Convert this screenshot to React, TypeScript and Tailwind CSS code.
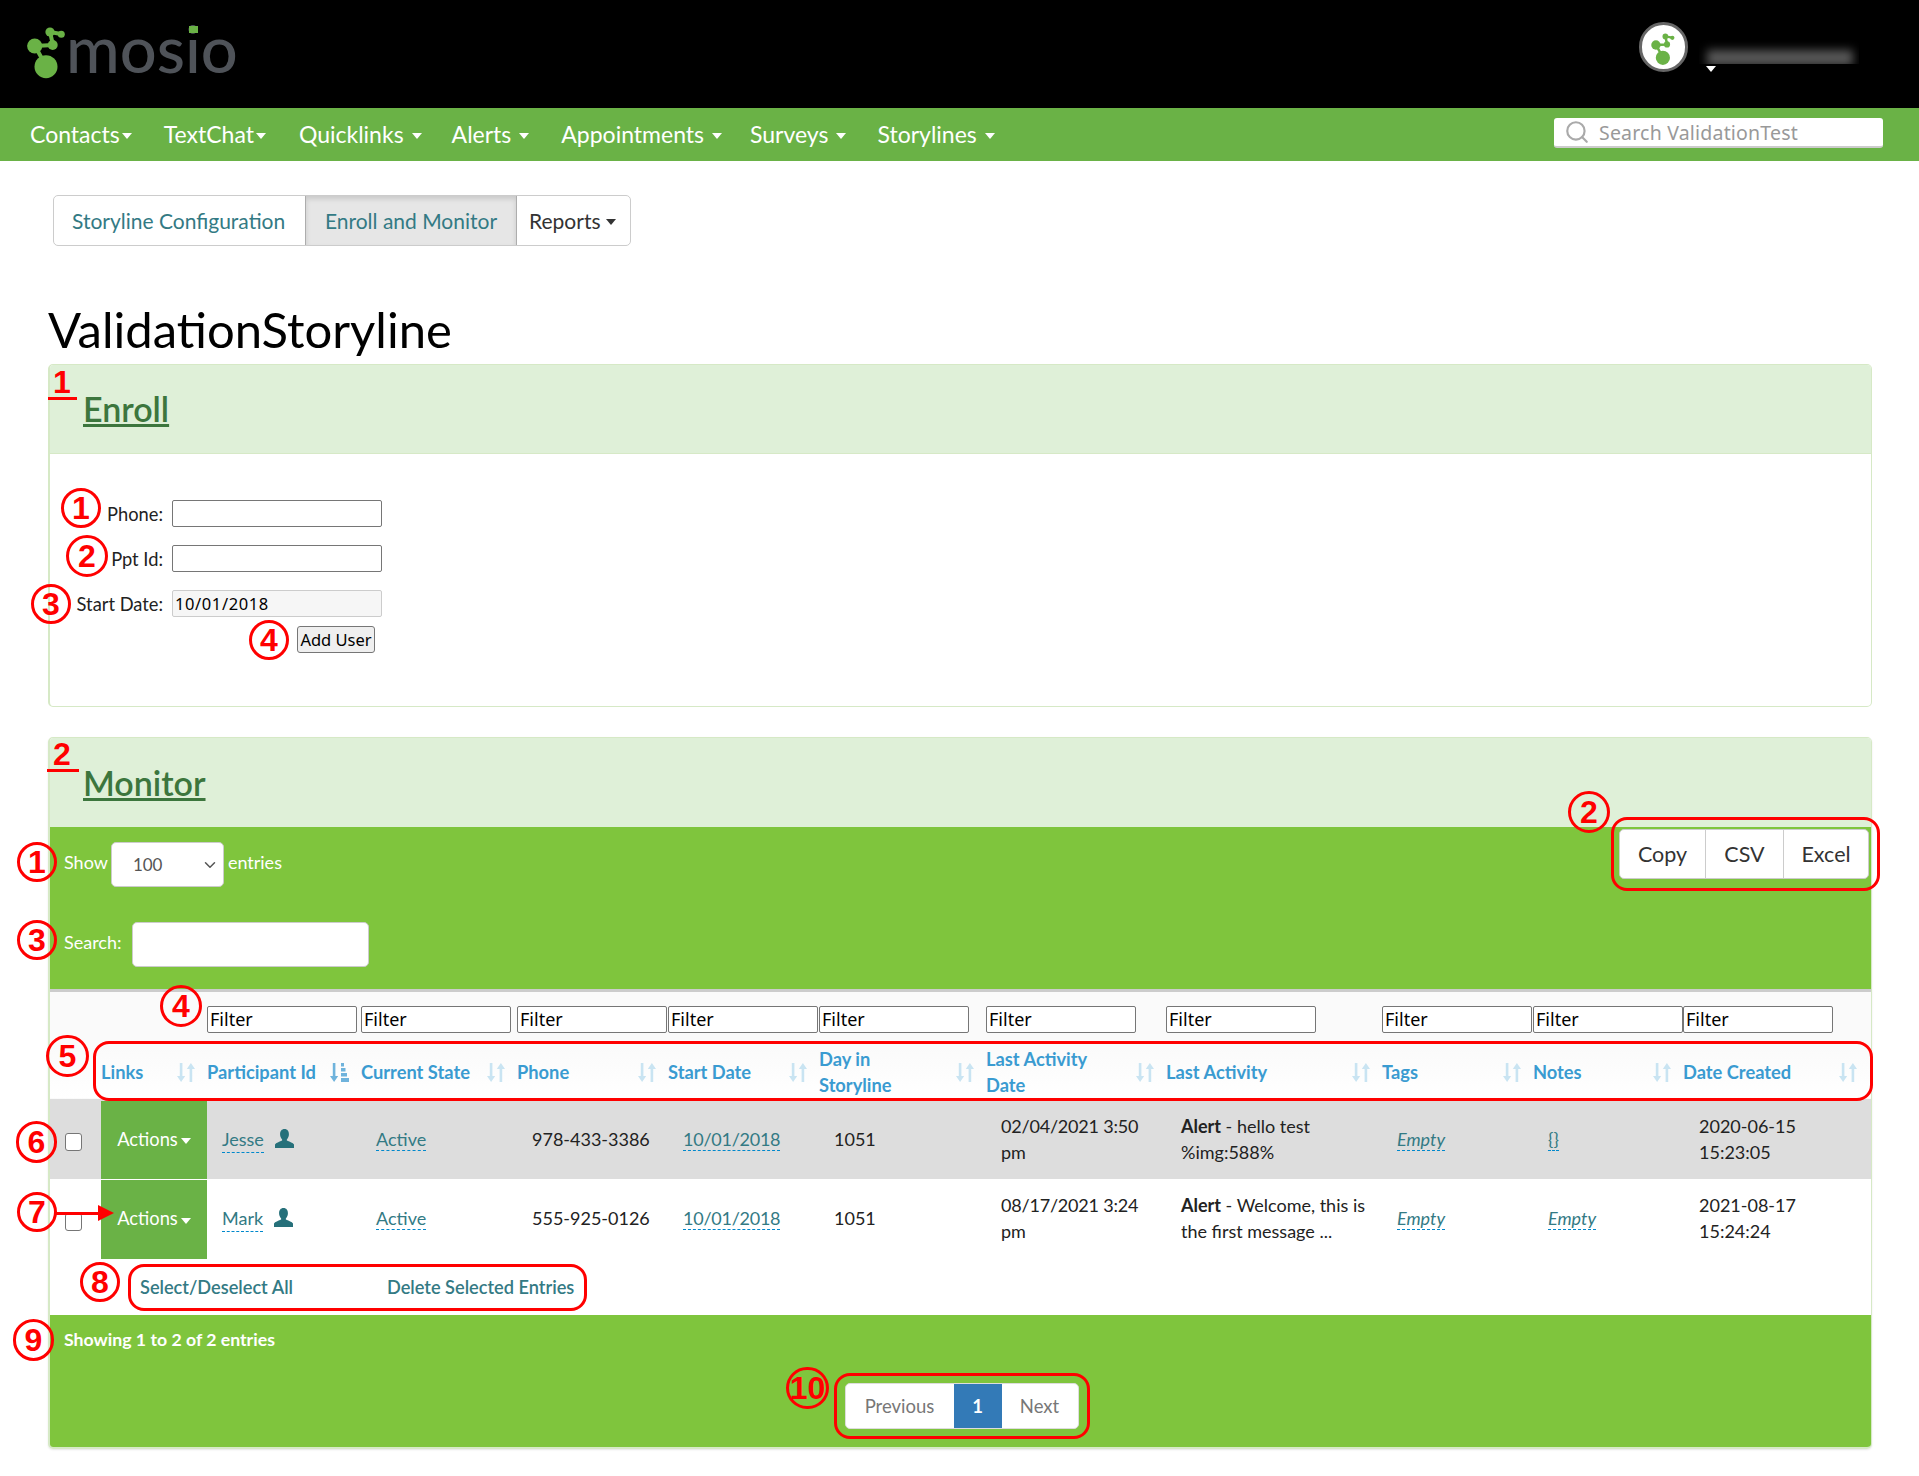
import React from "react";
import { Search, ChevronDown } from "lucide-react";

function Cluster({ className }: { className: string }) {
  return (
    <svg viewBox="0 0 40 60" className={className} fill="#6ab246">
      <path d="M8 26 L19 46 M8 26 L26 25 M26 25 L23 12 M23 12 L34 14" stroke="#6ab246" strokeWidth="4" fill="none" />
      <circle cx="19" cy="46.700" r="11.500" />
      <circle cx="7.700" cy="26" r="7.600" />
      <circle cx="25.700" cy="25" r="5" />
      <circle cx="23" cy="12" r="4.600" />
      <circle cx="34.300" cy="14.300" r="3.500" />
    </svg>
  );
}

function Caret({ className = "" }: { className?: string }) {
  return <span className={"inline-block w-0 h-0 border-x-[5px] border-x-transparent border-t-[6px] border-t-current " + className} />;
}

function NavItem({ label, tight, className }: { label: string; tight?: boolean; className: string }) {
  return (
    <a className={"flex items-center text-white text-[23px] " + className}>
      {label}
      <Caret className={tight ? "ml-[2px] mt-[3px]" : "ml-[8px] mt-[3px]"} />
    </a>
  );
}

function SortIcon() {
  return (
    <svg viewBox="0 0 18 19" className="w-[18px] h-[19px] shrink-0" fill="#c9e4f2">
      <path d="M2.800 0h2.600v13h2.800L4.100 19 0 13h2.800z" />
      <path d="M12.600 19h2.600V6H18L13.900 0 9.800 6h2.800z" />
    </svg>
  );
}

function SortedIcon() {
  return (
    <svg viewBox="0 0 19 19" className="w-[19px] h-[19px] shrink-0" fill="#6fb3dc">
      <path d="M2.800 0h2.600v13h2.800L4.100 19 0 13h2.800z" />
      <path d="M11 0h3v3.500h-3zM11 5h4.500v3.500H11zM11 10h6v3.500h-6zM11 15h8v4h-8z" />
    </svg>
  );
}

function Person() {
  return (
    <svg viewBox="0 0 18 18" className="w-[19px] h-[19px] ml-[11px] -mt-[2px] shrink-0" fill="#26707a">
      <path d="M9 0c2.700 0 4.200 2.100 4.200 4.900 0 1.900-.8 3.600-1.800 4.700-.4.500-.3 1.300.3 1.600 2.400 1 5.300 2 6.300 3.500V18H0v-3.300c1-1.500 3.900-2.500 6.300-3.500.6-.3.700-1.100.3-1.600C5.600 8.500 4.800 6.800 4.800 4.900 4.800 2.100 6.300 0 9 0z" />
    </svg>
  );
}

function Editable({ children, italic, className = "" }: { children: React.ReactNode; italic?: boolean; className?: string }) {
  return (
    <a className={"text-[#337a84] border-b border-dashed border-[#0088cc] " + (italic ? "italic " : "") + className}>{children}</a>
  );
}

function Circle({ n, className }: { n: string; className: string }) {
  return (
    <div
      className={
        "absolute flex items-center justify-center rounded-full border-[3px] border-[#f00] font-['Liberation_Sans',sans-serif] font-bold text-[#f00] text-[32px] leading-none " +
        className
      }
    >
      {n}
    </div>
  );
}

function Box({ className }: { className: string }) {
  return <div className={"absolute rounded-[16px] border-[3px] border-[#f00] " + className} />;
}

const headers = ["Links", "Participant Id", "Current State", "Phone", "Start Date", "Day in Storyline", "Last Activity Date", "Last Activity", "Tags", "Notes", "Date Created"];

const formFont = "font-['Noto_Sans',sans-serif]";

function Row({
  bg,
  name,
  phone,
  when,
  msg,
  notes,
  created,
  gap,
}: {
  bg: string;
  name: string;
  phone: string;
  when: React.ReactNode;
  msg: React.ReactNode;
  notes: React.ReactNode;
  created: React.ReactNode;
  gap?: boolean;
}) {
  return (
    <tr className={bg}>
      <td className="pl-[15px]">
        <input type="checkbox" className={"block w-[17px] h-[18px] appearance-none bg-white border border-[#767676] rounded-[3px] " + (gap ? "mt-[6px]" : "mt-[5px]")} />
      </td>
      <td className={"p-0 " + (gap ? "border-t border-white" : "")}>
        <div className={"flex items-center justify-center bg-[#6ab246] text-white text-[18.300px] " + (gap ? "h-[79px]" : "h-[78px]")}>
          Actions
          <Caret className="ml-[3px] mt-[3px]" />
        </div>
      </td>
      <td className="pl-[15px]">
        <div className="flex items-center">
          <Editable>{name}</Editable>
          <Person />
        </div>
      </td>
      <td className="pl-[15px]">
        <Editable>Active</Editable>
      </td>
      <td className="pl-[15px]">{phone}</td>
      <td className="pl-[15px]">
        <Editable className="tracking-[-0.25px]">10/01/2018</Editable>
      </td>
      <td className="pl-[15px]">1051</td>
      <td className="pl-[15px] pr-[8px] tracking-[-0.2px]">{when}</td>
      <td className="pl-[15px] pr-[8px]">{msg}</td>
      <td className="pl-[15px]">
        <Editable italic>Empty</Editable>
      </td>
      <td className="pl-[15px]">{notes}</td>
      <td className="pl-[16px] pr-[40px]">{created}</td>
    </tr>
  );
}

export default function App() {
  return (
    <div className="relative w-[1919px] min-h-[1476px] bg-white font-[Lato,sans-serif] text-[18px] leading-[25.500px] text-[#222]">
      <header className="h-[108px] bg-black flex items-center justify-between pl-[27px] pr-[60px]">
        <div className="relative flex items-center -mt-[8px]">
          <Cluster className="w-[40px] h-[60px]" />
          <span className="text-[65px] font-medium leading-none text-[#4f5359] -ml-[1px] -mt-[3px]">mosio</span>
          <span className="absolute left-[162px] top-[7px] w-[9px] h-[7px] bg-[#6ab246]" />
        </div>
        <div className="flex items-center">
          <div className="flex items-center justify-center w-[49px] h-[50px] rounded-full bg-white border-[3px] border-[#666] -mt-[14px]">
            <Cluster className="w-[25px] h-[37px]" />
          </div>
          <div className="ml-[11px] relative w-[160px] h-[34px] mt-[2px]">
            <div className="relative h-[26px] overflow-hidden">
              <div className="absolute left-[8px] right-[6px] top-[12px] h-[16px] bg-[#585858] blur-[5px]" />
            </div>
            <Caret className="absolute left-[7px] top-[28px] text-white" />
          </div>
        </div>
      </header>

      <nav className="h-[53px] bg-[#6ab246] flex items-center pl-[30px] pr-[36px]">
        <NavItem label="Contacts" tight className="mr-[32px]" />
        <NavItem label="TextChat" tight className="mr-[33px]" />
        <NavItem label="Quicklinks" className="mr-[30px]" />
        <NavItem label="Alerts" className="mr-[32px]" />
        <NavItem label="Appointments" className="mr-[28px]" />
        <NavItem label="Surveys" className="mr-[31px]" />
        <NavItem label="Storylines" className="mr-[30px]" />
        <div className="ml-auto -mt-[3px] flex items-center w-[329px] h-[30px] bg-white rounded-[3px] border-b-2 border-[#ccc] pl-[10px]">
          <Search className="w-[26px] h-[26px] text-[#aaa] shrink-0" strokeWidth={2} />
          <span className="ml-[9px] mt-[2px] font-['Noto_Sans',sans-serif] text-[#999] text-[19.500px] tracking-[0.2px]">Search ValidationTest</span>
        </div>
      </nav>

      <main className="pl-[48px] pr-[47px]">
        <div className="ml-[5px] mt-[34px] inline-flex h-[51px] text-[21px] border border-[#ccc] rounded-[5px] overflow-hidden align-top">
          <a className="flex items-center px-[18px] text-[#337a84] w-[251px] whitespace-nowrap">Storyline Configuration</a>
          <a className="flex items-center justify-center w-[212px] bg-[#e6e6e6] border-x border-[#adadad] shadow-[inset_0_3px_5px_rgba(0,0,0,0.125)] text-[#337a84] whitespace-nowrap">Enroll and Monitor</a>
          <a className="flex items-center pl-[12px] text-[#333] w-[113px]">
            Reports
            <Caret className="ml-[5px] mt-[2px]" />
          </a>
        </div>

        <h1 className="mt-[46px] h-[72px] flex items-center pt-[2px] text-[49px] leading-none text-black">ValidationStoryline</h1>

        <section className="border border-l-2 border-[#d6e9c6] rounded-[5px] overflow-hidden h-[343px]">
          <div className="h-[89px] bg-[#dff0d8] border-b border-[#d6e9c6] flex items-center pl-[33px]">
            <a className="text-[34px] font-semibold underline text-[#3c763d] leading-none">Enroll</a>
          </div>
          <div className="pt-[46px] w-[340px] text-[18.300px]">
            <div className="flex items-center h-[27px]">
              <label className="w-[113px] text-right mt-[3px]">Phone:</label>
              <input className="ml-[9px] w-[210px] h-[27px] bg-white border border-[#767676] rounded-[2px]" />
            </div>
            <div className="flex items-center h-[27px] mt-[18px]">
              <label className="w-[113px] text-right mt-[3px]">Ppt Id:</label>
              <input className="ml-[9px] w-[210px] h-[27px] bg-white border border-[#767676] rounded-[2px]" />
            </div>
            <div className="flex items-center h-[27px] mt-[18px]">
              <label className="w-[113px] text-right mt-[3px]">Start Date:</label>
              <input
                readOnly
                defaultValue="10/01/2018"
                className={"ml-[9px] w-[210px] h-[27px] bg-[#f6f6f6] border border-[#ccc] rounded-[2px] px-[2px] text-black text-[16.500px] tracking-[0.6px] " + formFont}
              />
            </div>
            <div className="mt-[9px] pl-[247px]">
              <button className={"block w-[78px] h-[27px] pt-[2px] bg-[#efefef] border border-[#767676] rounded-[3px] text-black text-[16.500px] leading-none " + formFont}>Add User</button>
            </div>
          </div>
        </section>

        <section className="mt-[30px] border border-l-2 border-b-2 border-[#d6e9c6] rounded-[5px] overflow-hidden shadow-[0_1px_2px_rgba(0,0,0,0.1)]">
          <div className="h-[89px] bg-[#dff0d8] flex items-center pl-[33px]">
            <a className="text-[34px] font-semibold underline text-[#3c763d] leading-none">Monitor</a>
          </div>
          <div className="bg-[#7fc53d] h-[162px] flex justify-between text-white text-[18px]">
            <div className="pl-[14px]">
              <div className="flex items-center h-[45px] mt-[15px]">
                <span className="-mt-[4px]">Show</span>
                <div className="relative ml-[3px]">
                  <select defaultValue="100" className="block appearance-none w-[113px] h-[45px] pl-[21px] bg-white text-[#555] text-[17px] border border-[#ccc] rounded-[5px]">
                    <option>10</option>
                    <option>100</option>
                  </select>
                  <ChevronDown className="absolute right-[5px] top-[14px] w-[18px] h-[18px] text-[#555] pointer-events-none" strokeWidth={2} />
                </div>
                <span className="ml-[4px] -mt-[4px]">entries</span>
              </div>
              <div className="flex items-center h-[45px] mt-[35px]">
                <span className="-mt-[4px]">Search:</span>
                <input className="ml-[11px] w-[237px] h-[45px] bg-white border border-[#ccc] rounded-[5px]" />
              </div>
            </div>
            <div className="mt-[2px] mr-[2px] flex h-[50px] w-[250px] bg-white rounded-[5px] border border-[#ccc] text-[#333] text-[21.500px]">
              <button className="w-[85px] pt-[1px]">Copy</button>
              <button className="w-[78px] pt-[1px] border-l border-[#ccc]">CSV</button>
              <button className="flex-1 pt-[1px] border-l border-[#ccc]">Excel</button>
            </div>
          </div>

          <table className="w-[1821px] table-fixed border-t-[3px] border-[#ccc]">
            <colgroup>
              <col className="w-[51px]" />
              <col className="w-[106px]" />
              <col className="w-[154px]" />
              <col className="w-[156px]" />
              <col className="w-[151px]" />
              <col className="w-[151px]" />
              <col className="w-[167px]" />
              <col className="w-[180px]" />
              <col className="w-[216px]" />
              <col className="w-[151px]" />
              <col className="w-[150px]" />
              <col className="w-[188px]" />
            </colgroup>
            <thead>
              <tr className="h-[54px] bg-[#fafafa]">
                <th />
                <th />
                {Array.from({ length: 10 }).map((_, i) => (
                  <th key={i} className="p-0 pt-[14px] align-top">
                    <input
                      placeholder="Filter"
                      className={"block w-[150px] h-[27px] pb-[2px] bg-white border border-[#767676] rounded-[2px] px-[2px] text-[18px] font-normal placeholder:text-black " + formFont}
                    />
                  </th>
                ))}
              </tr>
              <tr className="h-[55px] bg-gradient-to-b from-[#fafafa] to-white border-b-2 border-[#ddd]">
                <th />
                {headers.map((h) => (
                  <th key={h} className="p-0 pt-[2px] text-left font-bold align-middle">
                    <div className={"flex items-center justify-between text-[#3a9bd1] text-[18.300px] " + (h === "Date Created" ? "pr-[14px]" : "pr-[12px]")}>
                      <span className={h.length > 14 ? "w-[125px]" : ""}>{h}</span>
                      {h === "Participant Id" ? <SortedIcon /> : <SortIcon />}
                    </div>
                  </th>
                ))}
              </tr>
            </thead>
            <tbody>
              <Row
                bg="bg-[#dddddd]"
                name="Jesse"
                phone="978-433-3386"
                when="02/04/2021 3:50 pm"
                msg={
                  <>
                    <div>
                      <b>Alert</b> - hello test
                    </div>
                    <div>%img:588%</div>
                  </>
                }
                notes={<Editable>{"{}"}</Editable>}
                created={
                  <>
                    2020-06-15
                    <br />
                    15:23:05
                  </>
                }
              />
              <Row
                bg="bg-white"
                name="Mark"
                phone="555-925-0126"
                when="08/17/2021 3:24 pm"
                msg={
                  <>
                    <div>
                      <b>Alert</b> - Welcome, this is
                    </div>
                    <div>the first message ...</div>
                  </>
                }
                notes={<Editable italic>Empty</Editable>}
                created={
                  <>
                    2021-08-17
                    <br />
                    15:24:24
                  </>
                }
                gap
              />
            </tbody>
          </table>

          <div className="h-[56px] pt-[2px] flex items-center pl-[90px] text-[#337a84] font-semibold text-[18.200px]">
            <a>Select/Deselect All</a>
            <a className="ml-[94px]">Delete Selected Entries</a>
          </div>

          <div className="bg-[#7fc53d] h-[132px]">
            <div className="pl-[14px] pt-[12px] text-white font-bold text-[17.700px]">Showing 1 to 2 of 2 entries</div>
            <div className="mt-[31px] flex justify-center">
              <div className="flex h-[46px] w-[234px] ml-[2px] bg-white rounded-[5px] border border-[#ddd] overflow-hidden text-[#777] text-[18.500px]">
                <a className="flex items-center justify-center w-[108px] pt-[1px]">Previous</a>
                <a className="flex items-center justify-center w-[48px] pt-[1px] bg-[#337ab7] text-white font-bold">1</a>
                <a className="flex items-center justify-center flex-1 pt-[1px]">Next</a>
              </div>
            </div>
          </div>
        </section>
      </main>

      {/* Red annotations laid over the screenshot */}
      <div className="absolute left-[53px] top-[366px] text-[#f00] text-[32px] font-bold leading-none font-['Liberation_Sans',sans-serif]">1</div>
      <div className="absolute left-[48px] top-[397px] w-[29px] h-[3px] bg-[#f00]" />
      <div className="absolute left-[53px] top-[738px] text-[#f00] text-[32px] font-bold leading-none font-['Liberation_Sans',sans-serif]">2</div>
      <div className="absolute left-[47px] top-[769px] w-[32px] h-[3px] bg-[#f00]" />

      <Circle n="1" className="left-[61px] top-[488px] w-[40px] h-[40px]" />
      <Circle n="2" className="left-[66px] top-[535px] w-[42px] h-[42px]" />
      <Circle n="3" className="left-[31px] top-[584px] w-[40px] h-[40px]" />
      <Circle n="4" className="left-[249px] top-[620px] w-[40px] h-[40px]" />
      <Circle n="1" className="left-[17px] top-[842px] w-[40px] h-[40px]" />
      <Circle n="3" className="left-[17px] top-[920px] w-[40px] h-[40px]" />
      <Circle n="2" className="left-[1568px] top-[791px] w-[42px] h-[42px]" />
      <Box className="left-[1611px] top-[817px] w-[269px] h-[74px]" />
      <Circle n="4" className="left-[160px] top-[985px] w-[42px] h-[42px]" />
      <Circle n="5" className="left-[46px] top-[1035px] w-[43px] h-[42px]" />
      <Box className="left-[93px] top-[1041px] w-[1780px] h-[60px]" />
      <Circle n="6" className="left-[16px] top-[1121px] w-[41px] h-[42px]" />
      <Circle n="7" className="left-[17px] top-[1192px] w-[40px] h-[40px]" />
      <div className="absolute left-[56px] top-[1212px] w-[44px] h-[3px] bg-[#f00]" />
      <div className="absolute left-[98px] top-[1205px] w-0 h-0 border-y-[8px] border-y-transparent border-l-[16px] border-l-[#f00]" />
      <Circle n="8" className="left-[80px] top-[1262px] w-[40px] h-[40px]" />
      <Box className="left-[128px] top-[1264px] w-[459px] h-[47px]" />
      <Circle n="9" className="left-[13px] top-[1319px] w-[41px] h-[42px]" />
      <Circle n="10" className="left-[786px] top-[1367px] w-[43px] h-[42px]" />
      <Box className="left-[834px] top-[1373px] w-[256px] h-[66px]" />
    </div>
  );
}
